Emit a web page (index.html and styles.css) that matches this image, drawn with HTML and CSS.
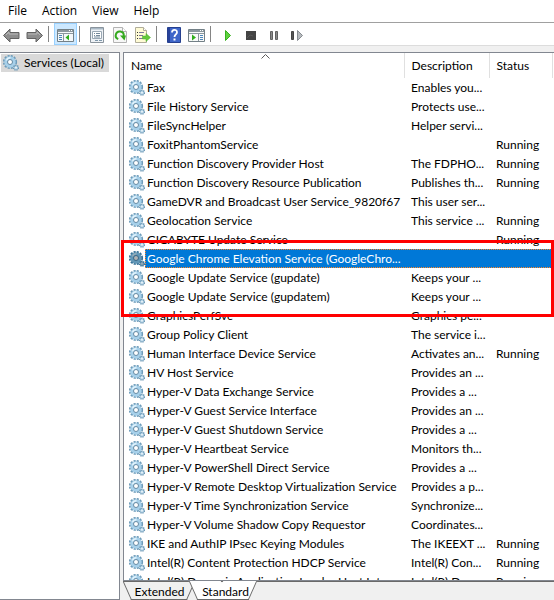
FILE: index.html
```
<!DOCTYPE html>
<html lang="en">

<head>
    <meta charset="UTF-8">
    <meta name="viewport" content="width=device-width, initial-scale=1.0">
    <title>Services</title>
    <link rel="stylesheet" href="styles.css">
</head>

<body>
    <svg class="defs" aria-hidden="true">
        <symbol id="gear" viewBox="0 0 16 16">
            <circle cx="7" cy="7" r="6" fill="none" stroke="#6d9bb9" stroke-width="2.2" stroke-dasharray="2.1 1.04"/>
            <circle cx="7" cy="7" r="4" fill="none" stroke="#a6d0ea" stroke-width="3.4"/>
            <path d="M3.5 5.5a4 4 0 0 1 4-2.7" fill="none" stroke="#e2f3fc" stroke-width="1.4"/>
            <circle cx="7" cy="7" r="2.5" fill="#fff" stroke="#6489a3" stroke-width="1"/>
            <circle cx="13" cy="12.7" r="2.4" fill="#b4d3e6" stroke="#6592b0" stroke-width="1.4" stroke-dasharray="1.1 0.8"/>
            <circle cx="13" cy="12.7" r="0.8" fill="#fff"/>
        </symbol>
    </svg>

    <div class="window">
        <nav class="menu">
            <button>File</button>
            <button>Action</button>
            <button>View</button>
            <button>Help</button>
        </nav>

        <div class="toolbar">
            <button aria-label="Back">
                <svg width="17" height="16" viewBox="0 0 17 16"><path d="M.5 8.500L7 2v3.500h9v6H7V15z" fill="#8e8e8e" stroke="#626262"/><path d="M3 8l3-3v2h9" fill="none" stroke="#b9b9b9"/></svg>
            </button>
            <button aria-label="Forward">
                <svg width="17" height="16" viewBox="0 0 17 16"><path d="M16.500 8.500L10 2v3.500H1v6h9V15z" fill="#8e8e8e" stroke="#626262"/><path d="M2 7h9V5l3 3" fill="none" stroke="#b9b9b9"/></svg>
            </button>
            <span class="sep"></span>
            <button class="active" aria-label="Show or hide console tree">
                <svg width="17" height="16" viewBox="0 0 17 16"><path d="M.5 2.500h16v12H.5z" fill="#f4f8fa" stroke="#738087"/><path d="M1 3h15v2H1z" fill="#8a979e"/><path d="M12 3.500h1m1 0h1" stroke="#fff"/><path d="M1 6.500h15M6.500 7v7" stroke="#8a979e"/><path d="M2 8.500h3M2 10.500h3M2 12.500h3" stroke="#4b86ba"/><path d="M12 7.500v6L8.500 10.500z" fill="#2fae1c"/></svg>
            </button>
            <span class="sep"></span>
            <button aria-label="Properties">
                <svg width="16" height="16" viewBox="0 0 16 16"><path d="M1.500.5h13v15h-13z" fill="#eef2f6" stroke="#8a949d"/><path d="M2 1h12v1.500H2z" fill="#a9b8c5"/><path d="M3.500 4.500h9v7h-9z" fill="#fff" stroke="#9aa8b4"/><path d="M5 6.500h1M5 8.500h1m1-2h4M7 8.500h4M5 10h6" stroke="#74899b"/><path d="M6 13.500h3m1 0h3" stroke="#7f97aa"/></svg>
            </button>
            <button aria-label="Refresh">
                <svg width="14" height="16" viewBox="0 0 14 16"><path d="M.5.5h9l4 4v11H.5z" fill="#f7f7f7" stroke="#b3b3b3"/><path d="M9.500.5v4h4" fill="#fff" stroke="#b3b3b3"/><path d="M5.200 12.200A4 4 0 1 1 10.700 9" fill="none" stroke="#35a91f" stroke-width="2"/><path d="M7 8.500h6l-1.500 5z" fill="#35a91f"/></svg>
            </button>
            <button aria-label="Export list">
                <svg width="17" height="16" viewBox="0 0 17 16"><path d="M1.500.5h8l3 3v12h-11z" fill="#fffbd5" stroke="#b0ad99"/><path d="M9.500.5v3h3" fill="#fff" stroke="#b0ad99"/><path d="M3 5.500h1M3 8.500h1M3 11.500h1" stroke="#333"/><path d="M5 5.500h5M5 8.500h4M5 11.500h4" stroke="#7a789a"/><path d="M8.500 9h3.500V6.500l4.500 4-4.500 4V12H8.500z" fill="#63c93b" stroke="#4bae2c" stroke-width=".5"/></svg>
            </button>
            <span class="sep"></span>
            <button aria-label="Help">
                <svg width="14" height="16" viewBox="0 0 14 16"><path d="M.5.5h13v15H.5z" fill="#3f66c9" stroke="#26408f"/><path d="M1 1h2v14H1z" fill="#27429b"/><path d="M5 5.500C5 2 10 2 10 5.200 10 7.500 7.500 7.300 7.500 10" fill="none" stroke="#fff" stroke-width="1.800"/><path d="M6.500 11.500h2v2h-2z" fill="#fff"/></svg>
            </button>
            <button aria-label="Show or hide action pane">
                <svg width="17" height="16" viewBox="0 0 17 16"><path d="M.5 2.500h16v12H.5z" fill="#f8f9f9" stroke="#738087"/><path d="M1 3h15v2H1z" fill="#8a979e"/><path d="M12 3.500h1m1 0h1" stroke="#fff"/><path d="M1 6.500h15M10.500 7v7" stroke="#8a979e"/><path d="M12 8.500h3M12 10.500h3M12 12.500h3" stroke="#4b86ba"/><path d="M4 7.500v6L8 10.500z" fill="#2fae1c"/></svg>
            </button>
            <span class="sep"></span>
            <button aria-label="Start service">
                <svg width="16" height="16" viewBox="0 0 16 16"><path d="M5.500 3.500v10l5-5z" fill="#5fd13f" stroke="#38b020"/></svg>
            </button>
            <button aria-label="Stop service">
                <svg width="16" height="16" viewBox="0 0 16 16"><path d="M3 4h10v9H3z" fill="#444"/><path d="M4 11l3-3 3 1" fill="none" stroke="#575757"/></svg>
            </button>
            <button aria-label="Pause service">
                <svg width="16" height="16" viewBox="0 0 16 16"><path d="M4.500 4.500h2v8h-2zM9.500 4.500h2v8h-2z" fill="#8a8a8a" stroke="#626262"/></svg>
            </button>
            <button aria-label="Restart service">
                <svg width="16" height="16" viewBox="0 0 16 16"><path d="M2.500 4.500h2v8h-2z" fill="#555" stroke="#444"/><path d="M8.500 3.500v10l5-5z" fill="#b5b9bd" stroke="#868b90"/></svg>
            </button>
        </div>

        <div class="content">
            <aside class="tree">
                <a href="#services" class="node"><svg class="icon"><use href="#gear"/></svg>Services (Local)</a>
            </aside>

            <main class="main">
                <div class="list" id="services">
                    <svg class="sort" width="9" height="5" viewBox="0 0 9 5"><path d="M.5 4.500l4-4 4 4" fill="none" stroke="#5a5a5a"/></svg>
                    <table>
                        <colgroup>
                            <col class="col-name">
                            <col class="col-desc">
                            <col class="col-status">
                            <col>
                        </colgroup>
                        <thead>
                            <tr><th>Name</th><th>Description</th><th>Status</th><th></th></tr>
                        </thead>
                        <tbody>
                            <tr><td><svg class="icon"><use href="#gear"/></svg>Fax</td><td>Enables you...</td><td></td></tr>
                            <tr><td><svg class="icon"><use href="#gear"/></svg>File History Service</td><td>Protects use...</td><td></td></tr>
                            <tr><td><svg class="icon"><use href="#gear"/></svg>FileSyncHelper</td><td>Helper servi...</td><td></td></tr>
                            <tr><td><svg class="icon"><use href="#gear"/></svg>FoxitPhantomService</td><td></td><td>Running</td></tr>
                            <tr><td><svg class="icon"><use href="#gear"/></svg>Function Discovery Provider Host</td><td>The FDPHO...</td><td>Running</td></tr>
                            <tr><td><svg class="icon"><use href="#gear"/></svg>Function Discovery Resource Publication</td><td>Publishes th...</td><td>Running</td></tr>
                            <tr><td><svg class="icon"><use href="#gear"/></svg>GameDVR and Broadcast User Service_9820f67</td><td>This user ser...</td><td></td></tr>
                            <tr><td><svg class="icon"><use href="#gear"/></svg>Geolocation Service</td><td>This service ...</td><td>Running</td></tr>
                            <tr><td><svg class="icon"><use href="#gear"/></svg>GIGABYTE Update Service</td><td></td><td>Running</td></tr>
                            <tr class="selected"><td colspan="4"><div class="cell"><svg class="icon"><use href="#gear"/></svg><span class="label">Google Chrome Elevation Service (GoogleChro...</span></div></td></tr>
                            <tr><td><svg class="icon"><use href="#gear"/></svg>Google Update Service (gupdate)</td><td>Keeps your ...</td><td></td></tr>
                            <tr><td><svg class="icon"><use href="#gear"/></svg>Google Update Service (gupdatem)</td><td>Keeps your ...</td><td></td></tr>
                            <tr><td><svg class="icon"><use href="#gear"/></svg>GraphicsPerfSvc</td><td>Graphics pe...</td><td></td></tr>
                            <tr><td><svg class="icon"><use href="#gear"/></svg>Group Policy Client</td><td>The service i...</td><td></td></tr>
                            <tr><td><svg class="icon"><use href="#gear"/></svg>Human Interface Device Service</td><td>Activates an...</td><td>Running</td></tr>
                            <tr><td><svg class="icon"><use href="#gear"/></svg>HV Host Service</td><td>Provides an ...</td><td></td></tr>
                            <tr><td><svg class="icon"><use href="#gear"/></svg>Hyper-V Data Exchange Service</td><td>Provides a ...</td><td></td></tr>
                            <tr><td><svg class="icon"><use href="#gear"/></svg>Hyper-V Guest Service Interface</td><td>Provides an ...</td><td></td></tr>
                            <tr><td><svg class="icon"><use href="#gear"/></svg>Hyper-V Guest Shutdown Service</td><td>Provides a ...</td><td></td></tr>
                            <tr><td><svg class="icon"><use href="#gear"/></svg>Hyper-V Heartbeat Service</td><td>Monitors th...</td><td></td></tr>
                            <tr><td><svg class="icon"><use href="#gear"/></svg>Hyper-V PowerShell Direct Service</td><td>Provides a ...</td><td></td></tr>
                            <tr><td><svg class="icon"><use href="#gear"/></svg>Hyper-V Remote Desktop Virtualization Service</td><td>Provides a p...</td><td></td></tr>
                            <tr><td><svg class="icon"><use href="#gear"/></svg>Hyper-V Time Synchronization Service</td><td>Synchronize...</td><td></td></tr>
                            <tr><td><svg class="icon"><use href="#gear"/></svg>Hyper-V Volume Shadow Copy Requestor</td><td>Coordinates...</td><td></td></tr>
                            <tr><td><svg class="icon"><use href="#gear"/></svg>IKE and AuthIP IPsec Keying Modules</td><td>The IKEEXT ...</td><td>Running</td></tr>
                            <tr><td><svg class="icon"><use href="#gear"/></svg>Intel(R) Content Protection HDCP Service</td><td>Intel(R) Con...</td><td>Running</td></tr>
                            <tr><td><svg class="icon"><use href="#gear"/></svg>Intel(R) Dynamic Application Loader Host Inter...</td><td>Intel(R) Dyn...</td><td>Running</td></tr>
                        </tbody>
                    </table>
                </div>
                <div class="tabs">
                    <button class="tab">Extended</button>
                    <button class="tab current">Standard</button>
                </div>
                <div class="marker"></div>
            </main>
        </div>
    </div>
</body>

</html>
```

FILE: styles.css
```
* {
    box-sizing: border-box;
}

body {
    margin: 0;
    font-family: "Open Sans", "Noto Sans", sans-serif;
    font-size: 12px;
    line-height: 18px;
    color: #000;
    background-color: #f0f0f0;
}

button {
    font: inherit;
    color: inherit;
    background: none;
    border: none;
    padding: 0;
}

.defs {
    display: none;
}

.window {
    display: flex;
    flex-direction: column;
    height: 100vh;
}

.menu {
    display: flex;
    gap: 15px;
    height: 22px;
    padding: 0 8px;
    background-color: #fff;
}

.toolbar {
    display: flex;
    height: 24px;
    background-color: #fff;
    border-top: 1px solid #a0a0a0;
    border-bottom: 1px solid #dcdcdc;
}

.toolbar button {
    display: flex;
    align-items: center;
    justify-content: center;
    width: 23px;
    padding-top: 2px;
}

.toolbar .active {
    background-color: #cce8ff;
    border: 1px solid #99d1ff;
}

.sep {
    width: 8px;
    padding: 3px 2px;
}

.sep::before {
    content: "";
    display: block;
    width: 1px;
    height: 100%;
    background-color: #858585;
}

.content {
    display: flex;
    flex: 1;
    gap: 3px;
    min-height: 0;
    padding-top: 6px;
    font-family: Lato, "Open Sans", sans-serif;
}

.tree {
    width: 120px;
    padding: 1px;
    background-color: #fff;
    border: 1px solid #828790;
    border-left: none;
}

.node {
    display: flex;
    align-items: center;
    gap: 5px;
    width: 108px;
    height: 18px;
    padding-left: 2px;
    white-space: nowrap;
    color: #000;
    text-decoration: none;
    background-color: #d9d9d9;
}

.main {
    display: flex;
    flex: 1;
    flex-direction: column;
    min-width: 0;
    position: relative;
}

.list {
    flex: 1;
    min-height: 0;
    overflow: hidden;
    position: relative;
    background-color: #fff;
    border: 1px solid #828790;
    border-right: none;
}

.sort {
    position: absolute;
    top: 1px;
    left: 137px;
}

.icon {
    width: 16px;
    height: 16px;
    flex: none;
}

table {
    width: 100%;
    table-layout: fixed;
    border-collapse: collapse;
}

.col-name {
    width: 280px;
}

.col-desc {
    width: 85px;
}

.col-status {
    width: 63px;
}

th {
    height: 25px;
    padding: 0 0 0 7px;
    font-weight: normal;
    text-align: left;
    border-right: 1px solid #e0e0e0;
}

th:last-child {
    border: none;
}

td {
    height: 19px;
    padding: 0 0 0 7px;
    line-height: 17px;
    white-space: nowrap;
}

td:first-child {
    padding-left: 5px;
}

td .icon {
    margin-right: 2px;
    vertical-align: middle;
}

.cell {
    display: flex;
    align-items: center;
}

.selected .icon {
    margin-right: 0;
    filter: brightness(0.7) saturate(1.8);
}

.selected .label {
    flex: 1;
    padding-left: 1px;
    color: #fff;
    background-color: #0078d7;
    border: 1px dotted #ff8728;
}

/* red frame around the Google services */
.marker {
    position: absolute;
    top: 188px;
    left: -2px;
    right: 0;
    height: 77px;
    border: 3px solid #f00;
}

.tabs {
    display: flex;
    height: 19px;
    border-top: 1px solid #696969;
}

.tab {
    position: relative;
    z-index: 0;
    width: 66px;
    padding-left: 7px;
    line-height: 17px;
}

.tab::before,
.tab::after {
    content: "";
    position: absolute;
    z-index: -1;
    top: 0;
    bottom: 0;
    border: 1px solid #696969;
    border-top: none;
    background-color: #f0f0f0;
}

.tab::before {
    left: 4px;
    right: 30px;
    border-right: none;
    transform: skewX(24deg);
}

.tab::after {
    left: 30px;
    right: -2px;
    border-left: none;
    transform: skewX(-24deg);
}

.current::before,
.current::after {
    top: -1px;
    background-color: #fff;
}

.current::after {
    right: 2px;
}
```
